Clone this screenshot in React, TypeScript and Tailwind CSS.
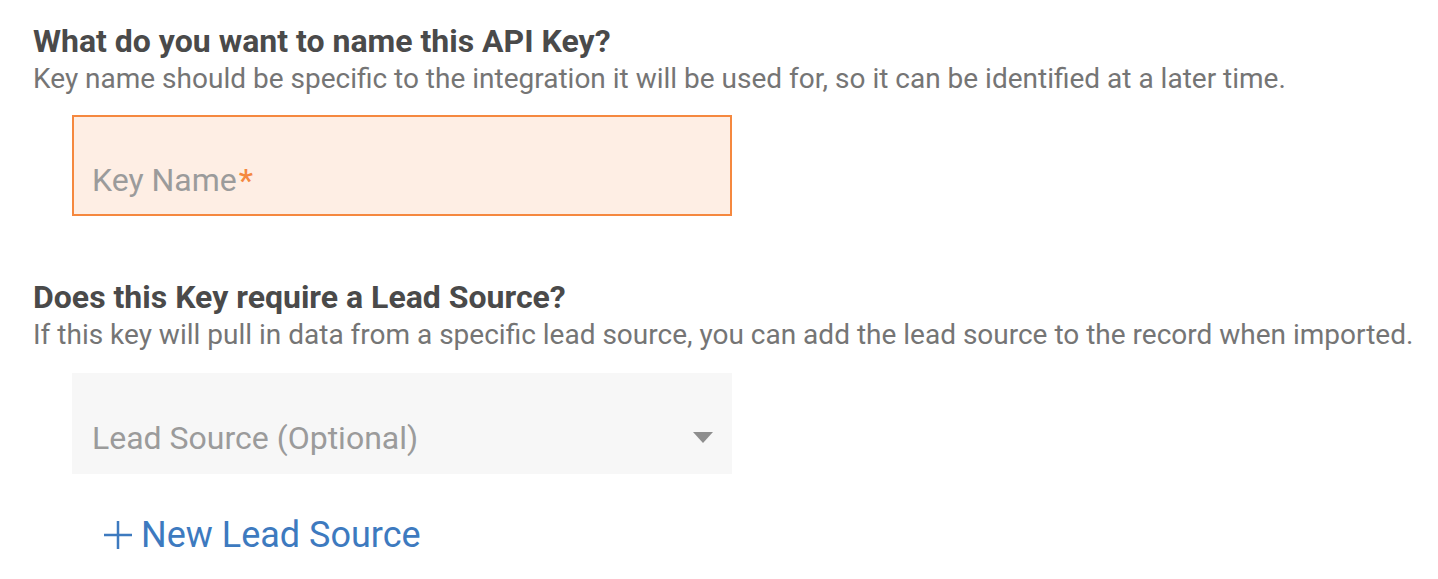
export default function App() {
  return (
    <div className="min-h-screen bg-white font-['Roboto',sans-serif] pl-[33px] pt-[23px]">
      <div className="text-[32px] font-bold leading-[36px] text-[#4a4a4a]">What do you want to name this API Key?</div>
      <div className="mt-[1px] text-[28px] leading-[38px] text-[#757575]">
        Key name should be specific to the integration it will be used for, so it can be identified at a later time.
      </div>
      <div className="ml-[39px] mt-[17px] flex h-[101px] w-[660px] items-end border-2 border-[#f5883f] bg-[#feeee4] px-[18px] pb-[14px]">
        <span className="text-[32px] leading-[40px] text-[#9b9b9b]">
          Key Name<span className="ml-[2px] font-medium text-[#f5883f]">*</span>
        </span>
      </div>
      <div className="mt-[63px] text-[32px] font-bold leading-[36px] text-[#4a4a4a]">Does this Key require a Lead Source?</div>
      <div className="mt-[1px] text-[28px] leading-[38px] text-[#757575]">
        If this key will pull in data from a specific lead source, you can add the lead source to the record when imported.
      </div>
      <div className="ml-[39px] mt-[19px] flex h-[101px] w-[660px] items-end justify-between bg-[#f7f7f7] pb-[16px] pl-[20px] pr-[19px]">
        <span className="text-[32px] leading-[40px] text-[#9b9b9b]">Lead Source (Optional)</span>
        <svg width="20" height="12" viewBox="0 0 20 12" className="mb-[14px]">
          <path d="M0 0 L20 0 L10 11 Z" fill="#8e8e8e" />
        </svg>
      </div>
      <div className="ml-[70px] mt-[39px] flex items-center gap-[8px] text-[36px] leading-[44px] text-[#3d7abf]">
        <svg width="30" height="30" viewBox="0 0 30 30">
          <path d="M15 1 V29 M1 15 H29" stroke="#3d7abf" strokeWidth="2.5" />
        </svg>
        <span>New Lead Source</span>
      </div>
    </div>
  );
}
